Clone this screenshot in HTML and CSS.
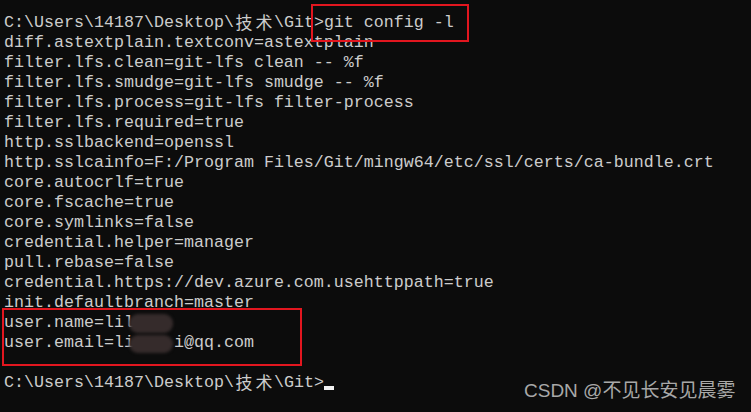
FILE: index.html
```html
<!DOCTYPE html>
<html lang="zh-CN">
<head>
<meta charset="utf-8">
<title>git config -l</title>
<link rel="stylesheet" href="styles.css">
</head>
<body>
<main class="console">
  <div class="line">C:\Users\14187\Desktop\<span class="cjk">技</span><span class="cjk">术</span>\Git&gt;git config -l</div>
  <div class="line">diff.astextplain.textconv=astextplain</div>
  <div class="line">filter.lfs.clean=git-lfs clean -- %f</div>
  <div class="line">filter.lfs.smudge=git-lfs smudge -- %f</div>
  <div class="line">filter.lfs.process=git-lfs filter-process</div>
  <div class="line">filter.lfs.required=true</div>
  <div class="line">http.sslbackend=openssl</div>
  <div class="line">http.sslcainfo=F:/Program Files/Git/mingw64/etc/ssl/certs/ca-bundle.crt</div>
  <div class="line">core.autocrlf=true</div>
  <div class="line">core.fscache=true</div>
  <div class="line">core.symlinks=false</div>
  <div class="line">credential.helper=manager</div>
  <div class="line">pull.rebase=false</div>
  <div class="line">credential.https://dev.azure.com.usehttppath=true</div>
  <div class="line">init.defaultbranch=master</div>
  <div class="line">user.name=lil</div>
  <div class="line">user.email=li    i@qq.com</div>
  <div class="line"> </div>
  <div class="line">C:\Users\14187\Desktop\<span class="cjk">技</span><span class="cjk">术</span>\Git&gt;<span class="cursor"></span></div>

  <div class="mark mark-cmd"></div>
  <div class="mark mark-user"></div>
  <div class="blur blur-name"></div>
  <div class="blur blur-email"></div>
  <div class="watermark">CSDN @不见长安见晨雾</div>
</main>
</body>
</html>
```
FILE: styles.css
```css
html, body {
  margin: 0;
  padding: 0;
  background: #0c0c0c;
}
.console {
  position: relative;
  width: 751px;
  height: 412px;
  box-sizing: border-box;
  padding: 13px 0 0 4px;
  background: #0c0c0c;
  color: #cccccc;
  font-family: "Liberation Mono", "DejaVu Sans Mono", monospace;
  font-size: 16.667px;
  overflow: hidden;
}
.line {
  height: 20px;
  line-height: 20px;
  white-space: pre;
}
.cjk {
  display: inline-block;
  width: 20px;
  text-align: center;
  font-family: "Noto Sans CJK SC", sans-serif;
  font-size: 17px;
  line-height: 18px;
  vertical-align: top;
}
.cursor {
  display: inline-block;
  width: 10px;
  height: 4px;
  background: #f2f2f2;
  vertical-align: -3px;
}
.mark {
  position: absolute;
  border: 2px solid #e3161f;
  box-sizing: border-box;
}
.mark-cmd {
  left: 311px;
  top: 4px;
  width: 158px;
  height: 38px;
}
.mark-user {
  left: 2px;
  top: 308px;
  width: 300px;
  height: 58px;
}
.blur {
  position: absolute;
  background: #352b2b;
  border-radius: 9px;
  filter: blur(1.5px);
}
.blur-name {
  left: 129px;
  top: 314px;
  width: 44px;
  height: 19px;
}
.blur-email {
  left: 129px;
  top: 335px;
  width: 44px;
  height: 18px;
}
.watermark {
  position: absolute;
  left: 524px;
  top: 380px;
  font-family: "Liberation Sans", "Noto Sans CJK SC", sans-serif;
  font-size: 19px;
  line-height: 22px;
  color: #a8a8a8;
  white-space: nowrap;
}
```
